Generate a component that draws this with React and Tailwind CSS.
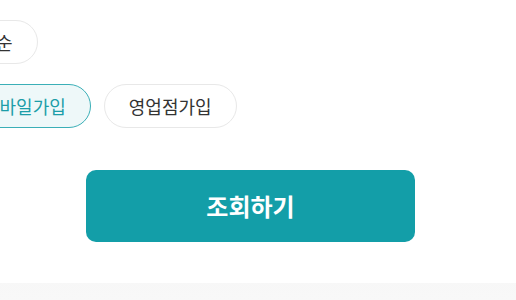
export default function App() {
  const font = { fontFamily: '"Noto Sans CJK KR", "Noto Sans", sans-serif' };

  return (
    <div className="w-[516px] h-[300px] overflow-hidden bg-gradient-to-b from-[#ececec] to-[#f8f8f8]" style={font}>
      <div className="bg-white pt-[20px] pb-[41px]">
        {/* sort */}
        <div className="flex -ml-[62px]">
          <button className="h-[44px] px-[24px] rounded-full border border-[#e8e8e8] bg-white text-[18px] text-[#333]">
            최신순
          </button>
        </div>

        {/* join type */}
        <div className="flex gap-[13px] mt-[20px] -ml-[42px]">
          <button className="h-[44px] px-[24px] rounded-full border border-[#3aafb7] bg-[#eef8f9] text-[18px] text-[#1c9ea8]">
            모바일가입
          </button>
          <button className="h-[44px] px-[24px] rounded-full border border-[#e8e8e8] bg-white text-[18px] text-[#333]">
            영업점가입
          </button>
        </div>

        <div className="mt-[42px] pl-[86px]">
          <button className="w-[329px] h-[72px] rounded-[10px] bg-[#139ea8] text-white text-[24px] font-bold">
            조회하기
          </button>
        </div>
      </div>
    </div>
  );
}
